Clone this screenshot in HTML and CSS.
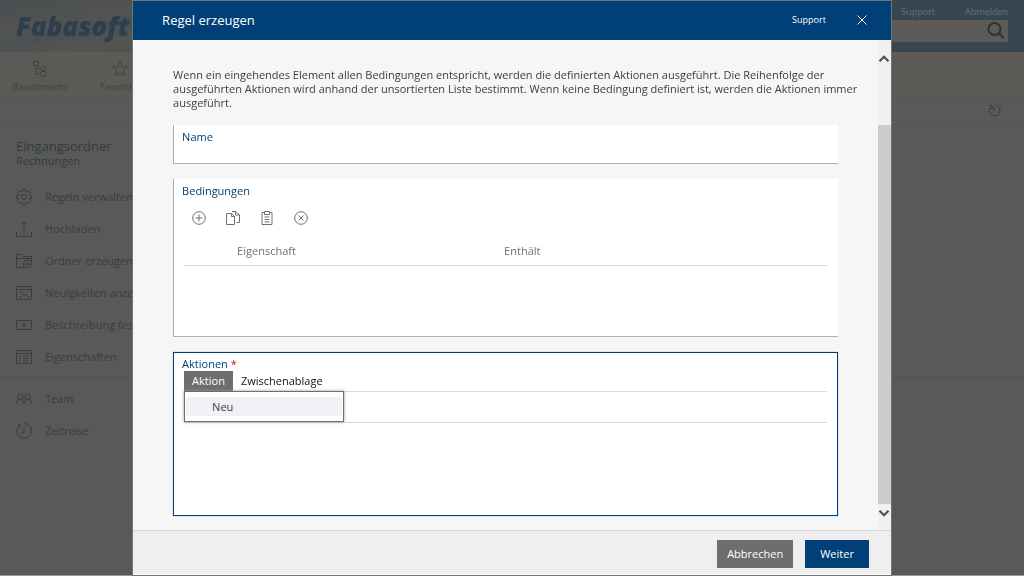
FILE: index.html
```html
<!DOCTYPE html>
<html lang="de">
<head>
<meta charset="utf-8">
<meta name="viewport" content="width=device-width, initial-scale=1">
<title>Regel erzeugen</title>
<link rel="stylesheet" href="styles.css">
</head>
<body>
<div class="page">
  <header class="banner">
    <a class="logo" href="#">Fabasoft</a>
    <div class="account">
      <nav class="account-links"><a href="#">Support</a><a href="#">Abmelden</a></nav>
      <div class="search">
        <input class="search-input" type="search" aria-label="Suche">
        <svg class="search-icon" viewBox="0 0 18 18"><circle cx="7.5" cy="7" r="6"/><path d="M11.800 11.300l5 5"/></svg>
      </div>
    </div>
  </header>
  <nav class="toolbar">
    <a class="tool" href="#"><svg class="icon" viewBox="0 0 16 16"><rect x="1.500" y=".5" width="5" height="4"/><rect x="9.500" y="5.500" width="4" height="4" rx="1"/><rect x="9" y="10.500" width="5" height="5" rx="1"/><path d="M4 4.500v8.500h5M4 7.500h5.500"/></svg>Baumansicht</a>
    <a class="tool" href="#"><svg class="icon" viewBox="0 0 16 16"><path d="M8 .8l2 5h5.300l-4.200 3.500 1.500 5.300L8 11.500l-4.600 3.100 1.500-5.300L.7 5.800H6z"/></svg>Favoriten</a>
  </nav>
  <div class="strip"><svg class="refresh" viewBox="0 0 13 13"><path d="M3.500 2.300A5.300 5.300 0 1 0 8.500 1.500M.5 1.500h3.500V5M6 3v4"/></svg></div>
  <aside class="sidebar">
    <h1 class="folder">Eingangsordner</h1>
    <p class="subfolder">Rechnungen</p>
    <nav class="actions">
      <a class="action" href="#"><svg class="icon" viewBox="0 0 16 16"><path d="M6.500.5h3v2l1.500.7 1.800-1.500 1.800 2-1.400 1.800.6 1h1.700v3h-1.700l-.6 1.500 1.400 1.500-2 2-1.600-1.300-1.500.6v1.700h-3v-1.700L5 13.200l-1.600 1.300-2-2L2.800 11l-.6-1.500H.5v-3h1.700l.6-1.500-1.400-1.500 2-2L5 2.900l1.500-.6z"/><circle cx="8" cy="8" r="2.500"/></svg>Regeln verwalten</a>
      <a class="action" href="#"><svg class="icon" viewBox="0 0 16 16"><path d="M.5 11v4.500h15V11M8 12V1M5 4l3-3 3 3"/></svg>Hochladen</a>
      <a class="action" href="#"><svg class="icon" viewBox="0 0 16 16"><path d="M8 14.500H.5v-13h5l1.500 2h8.500v6M.5 5.500h15"/><circle cx="11.500" cy="11" r="4"/><path d="M11.500 9v4M9.500 11h4"/></svg>Ordner erzeugen</a>
      <a class="action" href="#"><svg class="icon" viewBox="0 0 16 16"><path d="M.5 1.500h15v13H.5zM.5 4.500h15M3 7h3l2 3 2-1 1.500 3H14M3 12h3"/></svg>Neuigkeiten anzeigen</a>
      <a class="action" href="#"><svg class="icon" viewBox="0 0 16 16"><path d="M.5 3.500h15v9H.5zM5.500 7h5M5.500 9h5"/></svg>Beschreibung festlegen</a>
      <a class="action" href="#"><svg class="icon" viewBox="0 0 16 16"><path d="M.5 1.500h15v13H.5zM.5 4.500h15M3 7h2M7 7h6M3 9.500h2M7 9.500h6M3 12h2M7 12h6"/></svg>Eigenschaften</a>
    </nav>
    <nav class="actions actions-more">
      <a class="action" href="#"><svg class="icon" viewBox="0 0 16 16"><circle cx="4.500" cy="6" r="2.800"/><circle cx="11.500" cy="6" r="2.800"/><path d="M.7 13c0-2.500 1-4 2.500-4.500M5.800 8.500C7 9 8 11 8 13c0-2 1-4 2.200-4.500M12.800 8.500c1.500.5 2.500 2 2.500 4.500"/></svg>Team</a>
      <a class="action" href="#"><svg class="icon" viewBox="0 0 16 16"><path d="M4 2A7.300 7.300 0 1 0 8 .7M1.500 1.500L4 2l-.5 3M8 4v5l-3 1"/></svg>Zeitreise</a>
    </nav>
  </aside>
</div>

<div class="overlay">
  <form class="dialog" role="dialog" aria-labelledby="title">
    <header class="dialog-header">
      <h2 class="dialog-title" id="title">Regel erzeugen</h2>
      <a class="support" href="#">Support</a>
      <button class="close" type="button" aria-label="Schließen"><svg viewBox="0 0 10 10"><path d="M.5.5l9 9M9.500.5l-9 9"/></svg></button>
    </header>
    <div class="dialog-main">
      <div class="content">
        <p class="intro">Wenn ein eingehendes Element allen Bedingungen entspricht, werden die definierten Aktionen ausgeführt. Die Reihenfolge der ausgeführten Aktionen wird anhand der unsortierten Liste bestimmt. Wenn keine Bedingung definiert ist, werden die Aktionen immer ausgeführt.</p>
        <div class="field">
          <label class="label" for="name">Name</label>
          <input class="name-input" id="name" type="text">
        </div>
        <section class="field conditions">
          <h3 class="label">Bedingungen</h3>
          <div class="list-tools">
            <button class="list-tool" type="button" aria-label="Hinzufügen"><svg viewBox="0 0 14 14"><circle cx="7" cy="7" r="6.300"/><path d="M7 3.500v7M3.500 7h7"/></svg></button>
            <button class="list-tool" type="button" aria-label="Kopieren"><svg viewBox="0 0 14 14"><path d="M.5 2.500h5l3 3v8h-8zM5.500 2.500v3h3M6 .5h4l3.500 3.500v7.500h-3M9.500.5V4h4"/></svg></button>
            <button class="list-tool" type="button" aria-label="Einfügen"><svg viewBox="0 0 14 14"><path d="M4.500 1.500h-2.500v12h10v-12h-2.500M4.500.5h5v3h-5zM4.500 6h5M4.500 8.500h5M4.500 11h5"/></svg></button>
            <button class="list-tool" type="button" aria-label="Entfernen"><svg viewBox="0 0 14 14"><circle cx="7" cy="7" r="6.300"/><path d="M4.500 4.500l5 5M9.500 4.500l-5 5"/></svg></button>
          </div>
          <table class="table">
            <thead><tr><th class="col-mark"></th><th class="col-property">Eigenschaft</th><th>Enthält</th></tr></thead>
          </table>
        </section>
        <section class="field actions-field">
          <h3 class="label">Aktionen <span class="required">*</span></h3>
          <div class="menubar">
            <div class="menu-group">
              <button class="menu-button menu-open" type="button">Aktion</button>
              <div class="popup"><button class="popup-item" type="button">Neu</button></div>
            </div>
            <button class="menu-button" type="button">Zwischenablage</button>
          </div>
          <div class="list-head"></div>
        </section>
      </div>
      <div class="scrollbar">
        <button class="scroll-button" type="button" aria-label="Nach oben"><svg viewBox="0 0 10 8"><path d="M1 6.500l4-4 4 4"/></svg></button>
        <div class="track"><div class="thumb"></div></div>
        <button class="scroll-button" type="button" aria-label="Nach unten"><svg viewBox="0 0 10 8"><path d="M1 1.500l4 4 4-4"/></svg></button>
      </div>
    </div>
    <footer class="dialog-footer">
      <button class="button" type="button">Abbrechen</button>
      <button class="button button-primary" type="submit">Weiter</button>
    </footer>
  </form>
</div>
</body>
</html>
```

FILE: styles.css
```css
* { box-sizing: border-box; }
body { margin: 0; font-family: "Open Sans", "Noto Sans", sans-serif; font-size: 11px; line-height: 14px; color: #3c3c3c; background: #595957; }
h1, h2, h3, p { margin: 0; font-size: 11px; font-weight: 400; }
a { color: inherit; text-decoration: none; }
button, input { font: inherit; color: inherit; margin: 0; padding: 0; border: 0; background: none; }
svg { display: block; fill: none; stroke: currentColor; }

.page { min-height: 100vh; overflow: hidden; color: #3c3c3b; }
.banner { display: flex; justify-content: space-between; height: 52px; padding: 0 16px; background: linear-gradient(170deg, #484e51, #535451 40%, #4a5053 52%, #545552 70%, #4a5153) no-repeat left / 20% 100% #38474f; }
.logo { align-self: center; color: #2d3e4c; font-size: 26px; line-height: 38px; font-weight: 800; font-style: italic; }
.account { display: flex; flex-direction: column; width: 260px; }
.account-links { display: flex; justify-content: flex-end; gap: 30px; padding-top: 5px; font-size: 9px; color: #65717a; }
.search { display: flex; align-items: center; height: 22px; margin-top: 1px; padding-right: 3px; background: #5b5a57; }
.search-input { flex: 1; min-width: 0; height: 100%; }
.search-icon { width: 18px; height: 18px; stroke: #303030; stroke-width: 2; }
.toolbar { display: flex; height: 48px; background: #5b5a57; border-bottom: 1px solid #555553; font-size: 9px; }
.tool { display: flex; flex-direction: column; align-items: center; gap: 3px; width: 80px; padding-top: 9px; color: #414140; }
.icon { flex: none; width: 16px; height: 16px; }
.strip { display: flex; justify-content: flex-end; align-items: center; height: 21px; padding-right: 23px; border-bottom: 1px solid #545452; }
.refresh { width: 13px; height: 13px; }
.sidebar { padding-top: 17px; }
.folder { padding-left: 16px; font-size: 13px; line-height: 16px; color: #303b45; }
.subfolder { padding-left: 16px; color: #303b45; }
.actions { display: flex; flex-direction: column; padding-top: 13px; }
.action { display: flex; align-items: center; gap: 13px; height: 32px; padding-left: 16px; }
.actions-more { margin-top: 3px; padding-top: 6px; border-top: 1px solid #535352; }

.overlay { position: fixed; inset: 0; display: flex; justify-content: center; padding: 1px 13% 0; border-bottom: 1px solid #989898; }
.dialog { display: flex; flex-direction: column; width: 100%; background: #f6f6f6; border-bottom: 1px solid #fff; box-shadow: 0 0 0 1px #737373; }
.dialog-header { display: flex; align-items: center; height: 39px; padding: 0 24px 1px 29px; background: #003f77; color: #fff; }
.dialog-title { flex: 1; font-size: 13px; line-height: 18px; }
.support { font-size: 9px; }
.close { margin-left: 31px; }
.close svg { width: 10px; height: 10px; }
.dialog-main { display: flex; flex: 1; min-height: 0; }
.content { flex: 1; min-width: 0; padding: 28px 40px 14px; display: flex; flex-direction: column; gap: 15px; }
.intro { margin-right: -24px; }
.field { padding: 5px 8px; background: #fff; border-left: 1px solid #b0b0b0; border-bottom: 1px solid #b0b0b0; }
.label { display: block; color: #003f77; }
.name-input { display: block; width: 100%; height: 14px; }
.conditions { min-height: 158px; }
.list-tools { display: flex; gap: 20px; padding: 13px 0 0 10px; }
.list-tool, .list-tool svg { width: 14px; height: 14px; color: #707070; }
.table { width: calc(100% - 4px); margin: 19px 2px 0; border-collapse: collapse; table-layout: fixed; color: #707070; }
.table th { padding: 0 0 7px; font-weight: 400; text-align: left; border-bottom: 1px solid #dadada; }
.col-mark { width: 53px; }
.col-property { width: 267px; }
.actions-field { flex: 1; padding-top: 4px; border: 1px solid #003f77; box-shadow: 0 0 1px #5f92bd; }
.required { color: #e30613; }
.menubar { display: flex; margin: 0 2px; border-bottom: 1px solid #dadada; color: #111; }
.menu-group { position: relative; }
.menu-button { height: 20px; padding: 0 8px; }
.menu-open { background: #6e6e6e; color: #fff; }
.popup { position: absolute; top: 20px; left: 0; z-index: 1; width: 160px; padding: 5px 1px; background: #fff; border: 1px solid #6e6e6e; box-shadow: 0 0 3px #999; }
.popup-item { display: block; width: 100%; height: 19px; padding-left: 26px; text-align: left; background: #f0f0f5; color: #444; }
.list-head { height: 31px; margin: 0 2px; border-bottom: 1px solid #dadada; }
.scrollbar { display: flex; flex-direction: column; align-items: center; width: 13px; padding: 9px 0 8px; background: #f0f0f0; }
.scroll-button { display: flex; align-items: center; justify-content: center; width: 13px; height: 18px; }
.scroll-button svg { width: 12px; height: 9px; stroke: #505050; stroke-width: 2; }
.track { flex: 1; width: 100%; padding-top: 58px; }
.thumb { height: 100%; background: #cdcdcd; }
.dialog-footer { display: flex; justify-content: flex-end; align-items: center; gap: 12px; height: 44px; padding: 3px 22px 0; border-top: 1px solid #d6d6d6; background: #efefef; }
.button { height: 28px; padding: 0 10px; background: #6e6e6e; color: #fff; }
.button-primary { padding: 0 15px; background: #003f77; }
```
